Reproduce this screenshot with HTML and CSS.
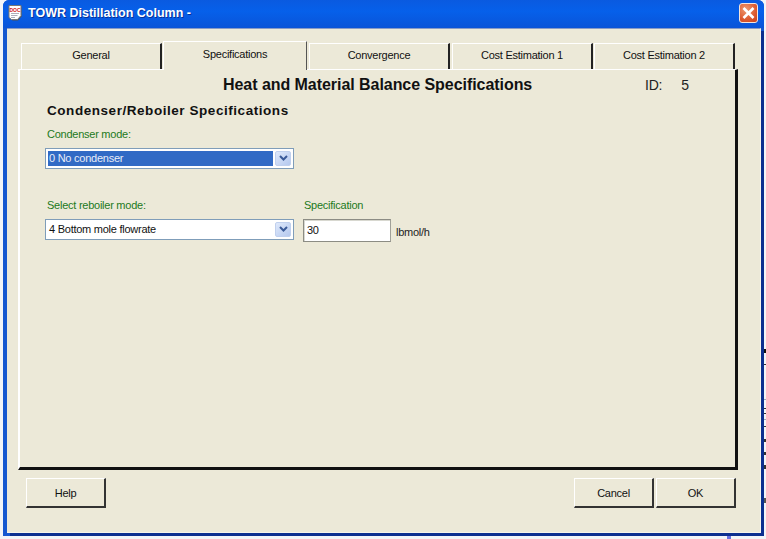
FILE: index.html
```html
<!DOCTYPE html>
<html lang="en">
<head>
    <meta charset="UTF-8">
    <title>TOWR Distillation Column</title>
    <link rel="stylesheet" href="styles.css">
</head>
<body>
    <div class="window">
        <div class="titlebar">
            <svg class="app-icon" width="16" height="17" viewBox="0 0 16 17">
                <path d="M2 1.500h11.500v10l-3.500 4H4.500l-2.500-2z" fill="#555"/>
                <path d="M1 .5h12v10l-3.500 4H3.500l-2.500-2z" fill="#fff" stroke="#777" stroke-width="1"/>
                <text x="7" y="6.500" text-anchor="middle" class="icon-text">DOC</text>
                <path d="M3 8.500h8M3 10.500h6.500M3 12.500h4" stroke="#99a" stroke-width=".8"/>
            </svg>
            <span class="title">TOWR Distillation Column -</span>
            <button class="close">
                <svg width="17" height="18" viewBox="0 0 17 18">
                    <path d="M3.500 4l10 10M13.500 4l-10 10" stroke="#fff" stroke-width="2.600" fill="none"/>
                </svg>
            </button>
        </div>

        <div class="client">
            <div class="tabs">
                <div class="tab tab-general">General</div>
                <div class="tab tab-active">Specifications</div>
                <div class="tab tab-conv">Convergence</div>
                <div class="tab tab-cost1">Cost Estimation 1</div>
                <div class="tab tab-cost2">Cost Estimation 2</div>
            </div>

            <div class="panel">
                <div class="panel-head">
                    <h1>Heat and Material Balance Specifications</h1>
                    <div class="id"><span>ID:</span><span>5</span></div>
                </div>
                <h2>Condenser/Reboiler Specifications</h2>

                <label class="green condenser-label">Condenser mode:</label>
                <div class="combo">
                    <div class="combo-text selected">0 No condenser</div>
                    <div class="combo-btn">
                        <svg width="9" height="7" viewBox="0 0 9 7"><path d="M1 1l3.500 3.500L8 1" fill="none" stroke="#3a5a98" stroke-width="2"/></svg>
                    </div>
                </div>

                <div class="reboiler-row">
                    <div class="field">
                        <label class="green">Select reboiler mode:</label>
                        <div class="combo">
                            <div class="combo-text">4 Bottom mole flowrate</div>
                            <div class="combo-btn">
                                <svg width="9" height="7" viewBox="0 0 9 7"><path d="M1 1l3.500 3.500L8 1" fill="none" stroke="#3a5a98" stroke-width="2"/></svg>
                            </div>
                        </div>
                    </div>
                    <div class="field spec-field">
                        <label class="green">Specification</label>
                        <div class="spec-line">
                            <div class="textbox">30</div>
                            <span class="unit">lbmol/h</span>
                        </div>
                    </div>
                </div>
            </div>

            <div class="buttons">
                <button class="btn">Help</button>
                <div class="btn-right">
                    <button class="btn">Cancel</button>
                    <button class="btn">OK</button>
                </div>
            </div>
        </div>
    </div>
</body>
</html>
```

FILE: styles.css
```css
* {
    margin: 0;
    padding: 0;
    box-sizing: border-box;
    font-family: "Liberation Sans", Arial, sans-serif;
}

/* bits of the window behind, showing along the right edge */
body {
    width: 766px;
    height: 539px;
    overflow: hidden;
    background-color: #f2f5f8;
    background-image:
        linear-gradient(#111, #111),
        linear-gradient(#333, #333),
        linear-gradient(#9ab, #9ab),
        linear-gradient(#333, #333),
        linear-gradient(#333, #333),
        linear-gradient(#9ab, #9ab),
        linear-gradient(#333, #333),
        linear-gradient(#333, #333),
        linear-gradient(#333, #333),
        linear-gradient(#333, #333),
        linear-gradient(#555, #555),
        linear-gradient(#6a70e0, #6a70e0);
    background-repeat: no-repeat;
    background-size:
        2px 4px, 2px 1px, 2px 1px, 2px 1px, 2px 1px, 2px 1px,
        2px 1px, 2px 3px, 2px 3px, 2px 4px, 2px 5px, 4px 3px;
    background-position:
        764px 349px, 764px 364px, 764px 399px, 764px 408px, 764px 413px, 764px 419px,
        764px 426px, 764px 439px, 764px 452px, 764px 465px, 764px 498px, 727px 536px;
}

.window {
    width: 761px;
    height: 536px;
    margin-left: 3px;
    background: #1458d0;
    border-radius: 6px 6px 0 0;
    padding: 0 3px 3px 4px;
    display: flex;
    flex-direction: column;
}

.titlebar {
    height: 28px;
    flex: none;
    margin: 0 -3px 0 -4px;
    padding: 0 6px 2px 5px;
    display: flex;
    align-items: center;
    border-radius: 6px 6px 0 0;
    background: linear-gradient(#0a5ae0, #0660ea 40%, #0a54d8);
}

.app-icon {
    margin-right: 4px;
}

.icon-text {
    font-size: 5px;
    font-weight: bold;
    fill: #d02020;
}

.title {
    color: #fff;
    font-size: 12.5px;
    font-weight: bold;
    text-shadow: 1px 1px 0 #04309a;
}

.close {
    margin-left: auto;
    width: 19px;
    height: 20px;
    border: 1px solid #f4e4dc;
    border-radius: 3px;
    background: radial-gradient(circle at 35% 30%, #ee9a70, #dc5a30 60%, #c8401c);
    display: flex;
}

.client {
    flex: 1;
    background: #ece9d8;
    border-top: 1px solid #8a9bc4;
    border-right: 1px solid #f6f4ea;
    border-bottom: 1px solid #f6f4ea;
    box-shadow: 3px 3px 0 #0c2f90;
    padding: 11px 0 0 11px;
    display: flex;
    flex-direction: column;
}

.tabs {
    display: flex;
    align-items: flex-end;
    height: 29px;
    padding-left: 3px;
    flex: none;
}

.tab {
    height: 26px;
    border-top: 1px solid #fff;
    border-left: 1px solid #fff;
    border-right: 2px solid #222;
    font-size: 11px;
    letter-spacing: -0.25px;
    color: #111;
    text-align: center;
    line-height: 22px;
}

.tab-general { width: 141px; margin-right: 1px; }
.tab-conv { width: 141px; margin-right: 2px; }
.tab-cost1 { width: 141px; margin-right: 1px; }
.tab-cost2 { width: 141px; }

.tab-active {
    width: 144px;
    height: 29px;
    line-height: 25px;
    margin-right: 2px;
    margin-bottom: -1px;
    border-right: 1px solid #555;
    position: relative;
    z-index: 1;
    background: #ece9d8;
}

.panel {
    width: 720px;
    height: 401px;
    flex: none;
    border-top: 1px solid #fff;
    border-left: 2px solid #fff;
    border-right: 3px solid #111;
    border-bottom: 3px solid #111;
    padding: 5px 0 0 27px;
}

.panel-head {
    display: flex;
    align-items: center;
    height: 20px;
    padding-left: 176px;
}

h1 {
    font-size: 16px;
    font-weight: bold;
    letter-spacing: -0.05px;
    color: #111;
    width: 422px;
    white-space: nowrap;
}

.id {
    display: flex;
    gap: 19px;
    font-size: 14px;
    letter-spacing: -0.2px;
    color: #222;
}

h2 {
    font-size: 13.5px;
    font-weight: bold;
    color: #111;
    margin-top: 8px;
    letter-spacing: 0.55px;
    white-space: nowrap;
}

.green {
    display: block;
    color: #1c7a1c;
    font-size: 11px;
    letter-spacing: -0.25px;
    line-height: 14px;
}

.condenser-label {
    margin-top: 9px;
}

.combo {
    width: 249px;
    height: 21px;
    margin-top: 7px;
    margin-left: -2px;
    background: #fff;
    border: 1px solid #7f9db9;
    padding: 2px;
    display: flex;
    gap: 2px;
}

.combo-text {
    flex: 1;
    font-size: 11px;
    letter-spacing: -0.25px;
    line-height: 15px;
    color: #111;
    padding-left: 1px;
}

.selected {
    background: #316ac5;
    color: #e8ecf8;
}

.combo-btn {
    width: 16px;
    background: linear-gradient(135deg, #dfe9fb, #b4c8ee);
    border: 1px solid #c0d0ee;
    border-radius: 2px;
    display: flex;
    align-items: center;
    justify-content: center;
}

.reboiler-row {
    display: flex;
    margin-top: 29px;
}

.spec-field {
    margin-left: 10px;
}

.spec-line {
    display: flex;
    align-items: center;
    margin-top: 7px;
}

.textbox {
    width: 88px;
    height: 23px;
    margin-left: -1px;
    background: #fff;
    border: 1px solid #8c8c84;
    border-right-color: #a0a098;
    box-shadow: inset 1px 1px 0 #d8d8d0;
    font-size: 11px;
    letter-spacing: -0.25px;
    line-height: 21px;
    padding-left: 3px;
    color: #111;
}

.unit {
    font-size: 11px;
    letter-spacing: -0.25px;
    color: #222;
    margin-left: 5px;
    margin-top: 2px;
}

.buttons {
    display: flex;
    justify-content: space-between;
    width: 710px;
    margin: 8px 0 0 8px;
}

.btn-right {
    display: flex;
    gap: 2px;
}

.btn {
    width: 80px;
    height: 30px;
    background: #ece9d8;
    border: 1px solid #fff;
    border-right: 2px solid #333;
    border-bottom: 2px solid #333;
    font-size: 11px;
    letter-spacing: -0.25px;
    color: #111;
}
```
